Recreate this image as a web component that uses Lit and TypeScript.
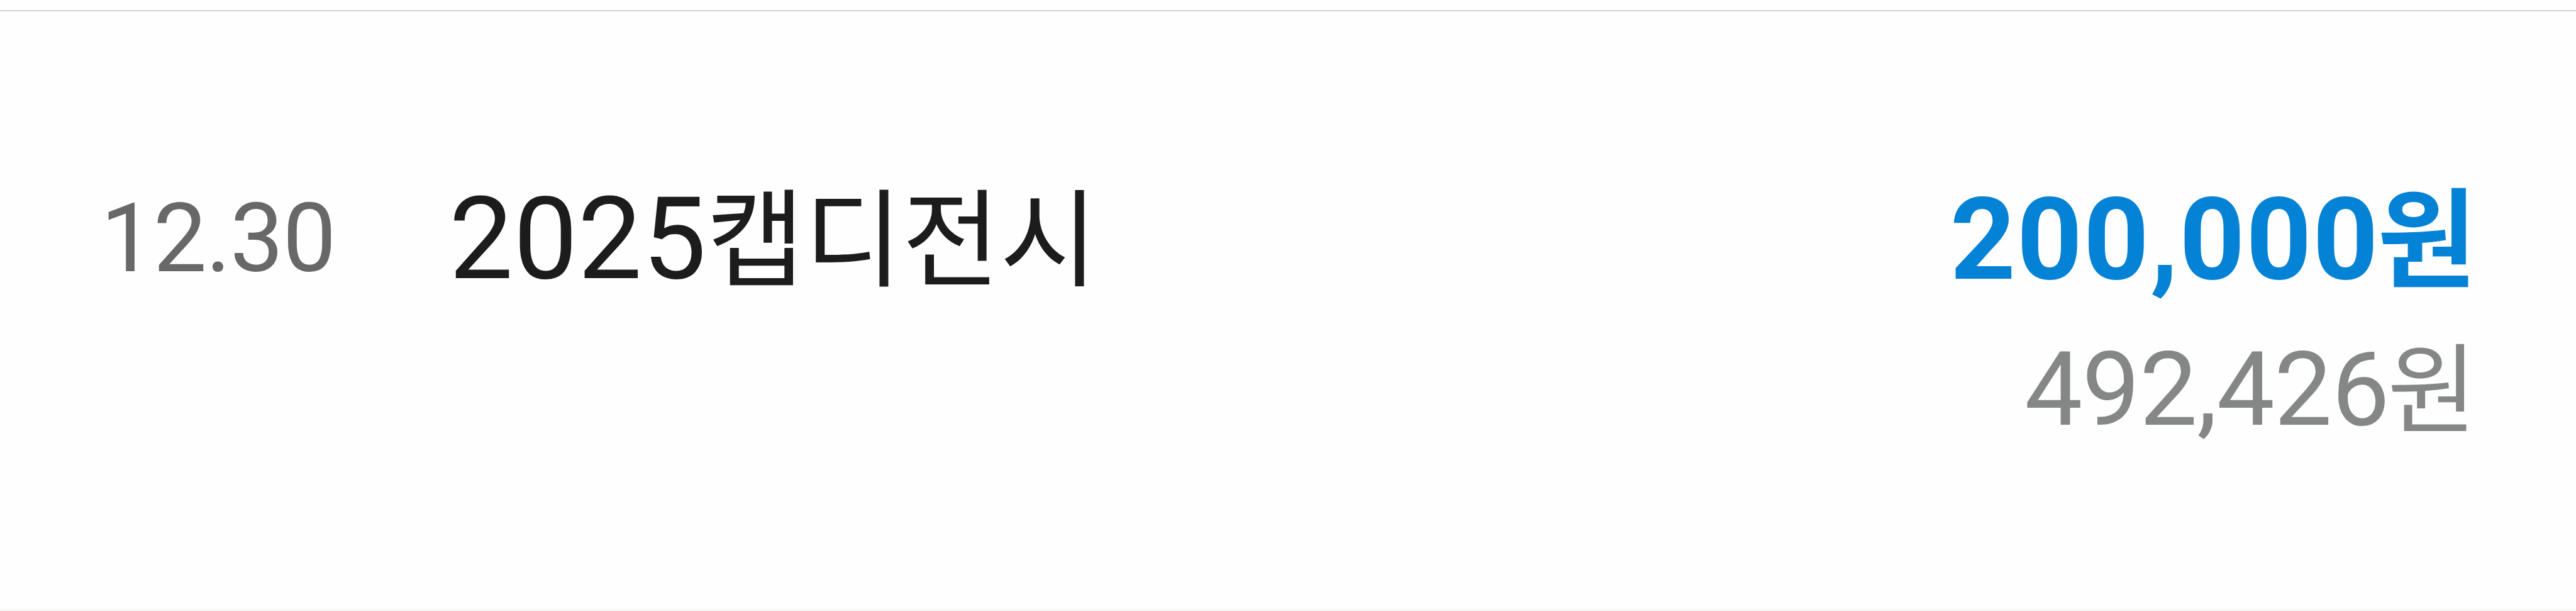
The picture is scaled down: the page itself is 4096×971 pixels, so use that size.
import { html, css, LitElement } from 'lit';
import { customElement, property } from 'lit/decorators.js';

@customElement('transaction-row')
export class TransactionRow extends LitElement {
  static styles = css`
    :host {
      display: flex;
      box-sizing: border-box;
      padding: 247px 158px 0 160px;
      align-items: flex-start;
      line-height: 231px;
      white-space: nowrap;
    }

    .date {
      width: 554px;
      font-size: 151.5px;
      letter-spacing: -1.5px;
      line-height: 229px;
      color: #686868;
    }

    .title {
      flex: 1;
      font-size: 181.5px;
      letter-spacing: 0.4px;
      color: #1c1c1c;
    }

    .hangul {
      font-size: 0.931em;
      letter-spacing: 0;
      line-height: 0;
    }

    .won {
      margin-left: -3px;
      font-size: 0.942em;
      letter-spacing: 0;
      line-height: 0;
    }

    .amounts {
      text-align: right;
    }

    .amount {
      font-size: 182px;
      font-weight: 700;
      letter-spacing: 1.6px;
      color: #0482d6;
    }

    .balance {
      font-size: 164px;
      letter-spacing: -0.8px;
      line-height: 246px;
      color: #858686;
    }
  `;

  @property() date = '';
  @property() year = '';
  @property() label = '';
  @property() amount = '';
  @property() balance = '';

  render() {
    return html`
      <div class="date">${this.date}</div>
      <div class="title">${this.year}<span class="hangul">${this.label}</span></div>
      <div class="amounts">
        <div class="amount">${this.amount}<span class="won">원</span></div>
        <div class="balance">${this.balance}<span class="won">원</span></div>
      </div>
    `;
  }
}

@customElement('app-root')
export class AppRoot extends LitElement {
  static styles = css`
    :host {
      display: flex;
      flex-direction: column;
      box-sizing: border-box;
      width: 100vw;
      height: 100vh;
      overflow: hidden;
      padding: 16px 0 0;
      background: #fefefe;
      font-family: Roboto, 'Noto Sans CJK KR', sans-serif;
    }

    .row {
      height: 955px;
      border-top: 2px solid #d0d2d2;
      border-bottom: 3px solid #f7f7f6;
    }
  `;

  render() {
    return html`
      <transaction-row
        class="row"
        date="12.30"
        year="2025"
        label="캡디전시"
        amount="200,000"
        balance="492,426"
      ></transaction-row>
    `;
  }
}
